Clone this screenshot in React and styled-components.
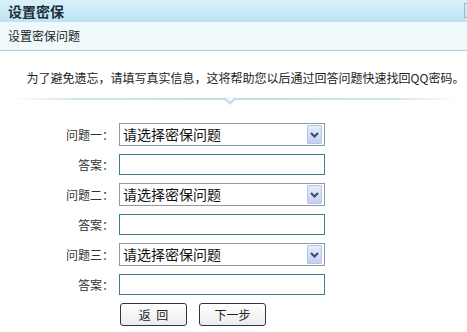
import styled, { createGlobalStyle } from "styled-components";

const GlobalStyle = createGlobalStyle`
  html, body {
    margin: 0;
    padding: 0;
    background: #fff;
  }
  body {
    font-family: "Noto Sans CJK SC", "DejaVu Sans", sans-serif;
    font-size: 12px;
    color: #333;
  }
`;

const QUESTIONS = ["问题一：", "问题二：", "问题三："];

const ChevronIcon = () => (
  <svg width="9" height="6" viewBox="0 0 9 6">
    <path d="M1 1 L4.5 4.5 L8 1" fill="none" stroke="#3b4a66" strokeWidth="2" />
  </svg>
);

export default function App() {
  return (
    <>
      <GlobalStyle />
      <Page>
        <TitleBar>
          <Title>设置密保</Title>
          <EdgeMark />
        </TitleBar>
        <SubBar>设置密保问题</SubBar>
        <Notice>为了避免遗忘，请填写真实信息，这将帮助您以后通过回答问题快速找回QQ密码。</Notice>
        <Divider>
          <Pointer />
        </Divider>
        <Form>
          {QUESTIONS.map((label) => (
            <FieldGroup key={label}>
              <Label>{label}</Label>
              <SelectBox>
                <SelectText>请选择密保问题</SelectText>
                <ArrowButton>
                  <ChevronIcon />
                </ArrowButton>
              </SelectBox>
              <Label>答案：</Label>
              <TextInput type="text" />
            </FieldGroup>
          ))}
          <span />
          <Actions>
            <Button>返&nbsp;&nbsp;回</Button>
            <Button>下一步</Button>
          </Actions>
        </Form>
      </Page>
    </>
  );
}

const Page = styled.div`
  width: 467px;
  height: 332px;
  overflow: hidden;
`;

const TitleBar = styled.div`
  height: 22px;
  display: flex;
  align-items: center;
  justify-content: space-between;
  padding-left: 8px;
  background: linear-gradient(to bottom, #daf0f9, #bde3f2);
`;

const Title = styled.h1`
  margin: 0;
  font-size: 14px;
  font-weight: 700;
  line-height: 22px;
  color: #1c2f3b;
`;

const EdgeMark = styled.span`
  width: 2px;
  height: 13px;
  border: 1px solid #9fb7c6;
  border-right: none;
  margin-bottom: 2px;
`;

const SubBar = styled.div`
  height: 28px;
  line-height: 27px;
  padding-left: 8px;
  background: #eff9fc;
  border-bottom: 1px solid #b3cfd7;
  color: #222;
`;

const Notice = styled.p`
  margin: 0;
  padding: 19px 0 0 24px;
  height: 28px;
  line-height: 16px;
  text-align: center;
  color: #222;
`;

const Divider = styled.div`
  position: relative;
  margin: 0 8px 0 12px;
  height: 2px;
  background: linear-gradient(
    to right,
    rgba(200, 222, 230, 0),
    #cfe3ea 15%,
    #c6dde5 50%,
    #cfe3ea 85%,
    rgba(200, 222, 230, 0)
  );
`;

const Pointer = styled.span`
  position: absolute;
  left: 211px;
  top: 0;
  width: 0;
  height: 0;
  border-left: 7px solid transparent;
  border-right: 7px solid transparent;
  border-top: 7px solid #c6dde5;

  &::after {
    content: "";
    position: absolute;
    left: -5px;
    top: -8px;
    border-left: 5px solid transparent;
    border-right: 5px solid transparent;
    border-top: 5px solid #f4fafc;
  }
`;

const Form = styled.div`
  margin-top: 23px;
  display: grid;
  grid-template-columns: 114px 206px;
  column-gap: 5px;
  row-gap: 8px;
  align-items: center;
`;

const FieldGroup = styled.div`
  display: contents;
`;

const Label = styled.label`
  text-align: right;
  color: #333;
  font-size: 12px;
`;

const SelectBox = styled.div`
  box-sizing: border-box;
  height: 23px;
  display: flex;
  align-items: center;
  border: 1px solid #8d9aa6;
  background: #fff;
  padding: 1px 2px 1px 3px;
`;

const SelectText = styled.span`
  flex: 1;
  font-size: 14px;
  color: #111;
  line-height: 19px;
`;

const ArrowButton = styled.span`
  box-sizing: border-box;
  width: 15px;
  height: 19px;
  display: flex;
  align-items: center;
  justify-content: center;
  border: 1px solid #b7c4e6;
  border-radius: 1px;
  background: linear-gradient(to bottom, #e6ecfb, #c4d1f3);
`;

const TextInput = styled.input`
  box-sizing: border-box;
  height: 21px;
  width: 206px;
  margin: 0;
  padding: 0 3px;
  border: 1px solid #3f7f8b;
  background: #fff;
  outline: none;
`;

const Actions = styled.div`
  display: flex;
  gap: 12px;
  padding-left: 1px;
`;

const Button = styled.button`
  box-sizing: border-box;
  width: 67px;
  height: 23px;
  padding: 0;
  border: 1px solid #2b3642;
  border-radius: 3px;
  background: linear-gradient(to bottom, #ffffff, #ececec);
  font-family: "Noto Sans CJK SC", "DejaVu Sans", sans-serif;
  font-size: 12px;
  color: #222;
`;
